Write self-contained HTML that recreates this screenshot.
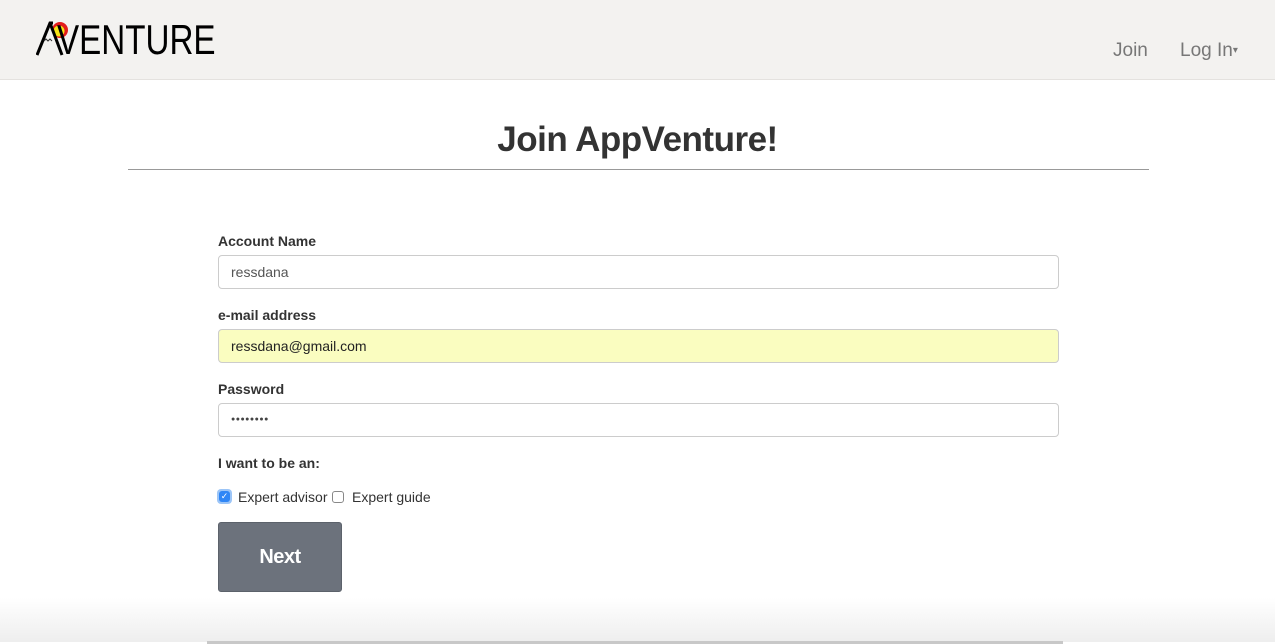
<!DOCTYPE html>
<html><head><style>
*{box-sizing:border-box}
body{margin:0;width:1275px;height:644px;overflow:hidden;background:#fff;font-family:"Liberation Sans",sans-serif;color:#333;position:relative}
.nav{position:absolute;left:0;top:0;width:1275px;height:80px;background:#f3f2f0;border-bottom:1px solid #e4e2df}
.logo{position:absolute;top:17px;font-size:42px;line-height:46px;color:#000;font-family:"Liberation Sans",sans-serif;transform:scaleX(0.79);transform-origin:left top}
.navr{position:absolute;top:40px;font-size:19px;color:#777}
h1{position:absolute;left:0;width:1275px;top:120px;margin:0;text-align:center;font-size:35px;font-weight:bold;color:#333;letter-spacing:-0.5px}
.hr{position:absolute;left:128px;width:1021px;top:169px;height:1px;background:#999}
label{position:absolute;left:218px;font-size:14px;font-weight:bold;color:#333}
.inp{position:absolute;left:218px;width:841px;height:34px;border:1px solid #ccc;border-radius:4px;font-size:14px;padding:8px 12px;color:#555}
.btn{position:absolute;left:218px;top:522px;width:124px;height:70px;background:#6c727c;border:1px solid #5c626b;border-radius:3px;color:#fff;font-size:20px;font-weight:bold;text-align:center;line-height:68px;letter-spacing:-0.5px}
.shadow{position:absolute;left:0;top:598px;width:1275px;height:44px;background:linear-gradient(#fff,#eeeeee)}
.line{position:absolute;left:207px;top:641px;width:856px;height:3px;background:#c8c8c8}
</style></head><body>
<div class="nav">
<svg style="position:absolute;left:36px;top:18px" width="34" height="40" viewBox="0 0 34 40">
<circle cx="24" cy="12" r="8" fill="#e31c1c"/><circle cx="23" cy="13" r="5.5" fill="#f6e316"/>
<path d="M1 37 L14 5 L17 5 M14 5 L26 37" stroke="#000" stroke-width="3" fill="none"/>
<path d="M8 23 l2 -2 l2 2 l2 -2 l2 2" stroke="#333" stroke-width="1" fill="none"/>
</svg>
<div class="logo" style="left:57px">VENTURE</div>
<div class="navr" style="left:1113px">Join</div>
<div class="navr" style="left:1180px">Log In<span style="font-size:10px;vertical-align:3px">▾</span></div>
</div>
<h1>Join AppVenture!</h1>
<div class="hr"></div>
<label style="top:233px">Account Name</label>
<div class="inp" style="top:255px">ressdana</div>
<label style="top:307px">e-mail address</label>
<div class="inp" style="top:329px;background:#fafdc0;color:#222">ressdana@gmail.com</div>
<label style="top:381px">Password</label>
<div class="inp" style="top:403px;font-size:7px;padding-top:12px;color:#444;letter-spacing:0.5px">●●●●●●●●</div>
<label style="top:455px">I want to be an:</label>
<div style="position:absolute;left:217px;top:489px;width:15px;height:15px;border-radius:4px;background:#9cc5f7"></div>
<div style="position:absolute;left:219px;top:491px;width:11px;height:11px;border-radius:3px;background:#2f86f6;color:#fff;font-size:9px;line-height:11px;text-align:center">✓</div>
<div style="position:absolute;left:238px;top:489px;font-size:14px">Expert advisor</div>
<div style="position:absolute;left:332px;top:491px;width:12px;height:12px;border:1px solid #888;border-radius:3px"></div>
<div style="position:absolute;left:352px;top:489px;font-size:14px">Expert guide</div>
<div class="btn">Next</div>
<div class="shadow"></div>
<div class="line"></div>
</body></html>
